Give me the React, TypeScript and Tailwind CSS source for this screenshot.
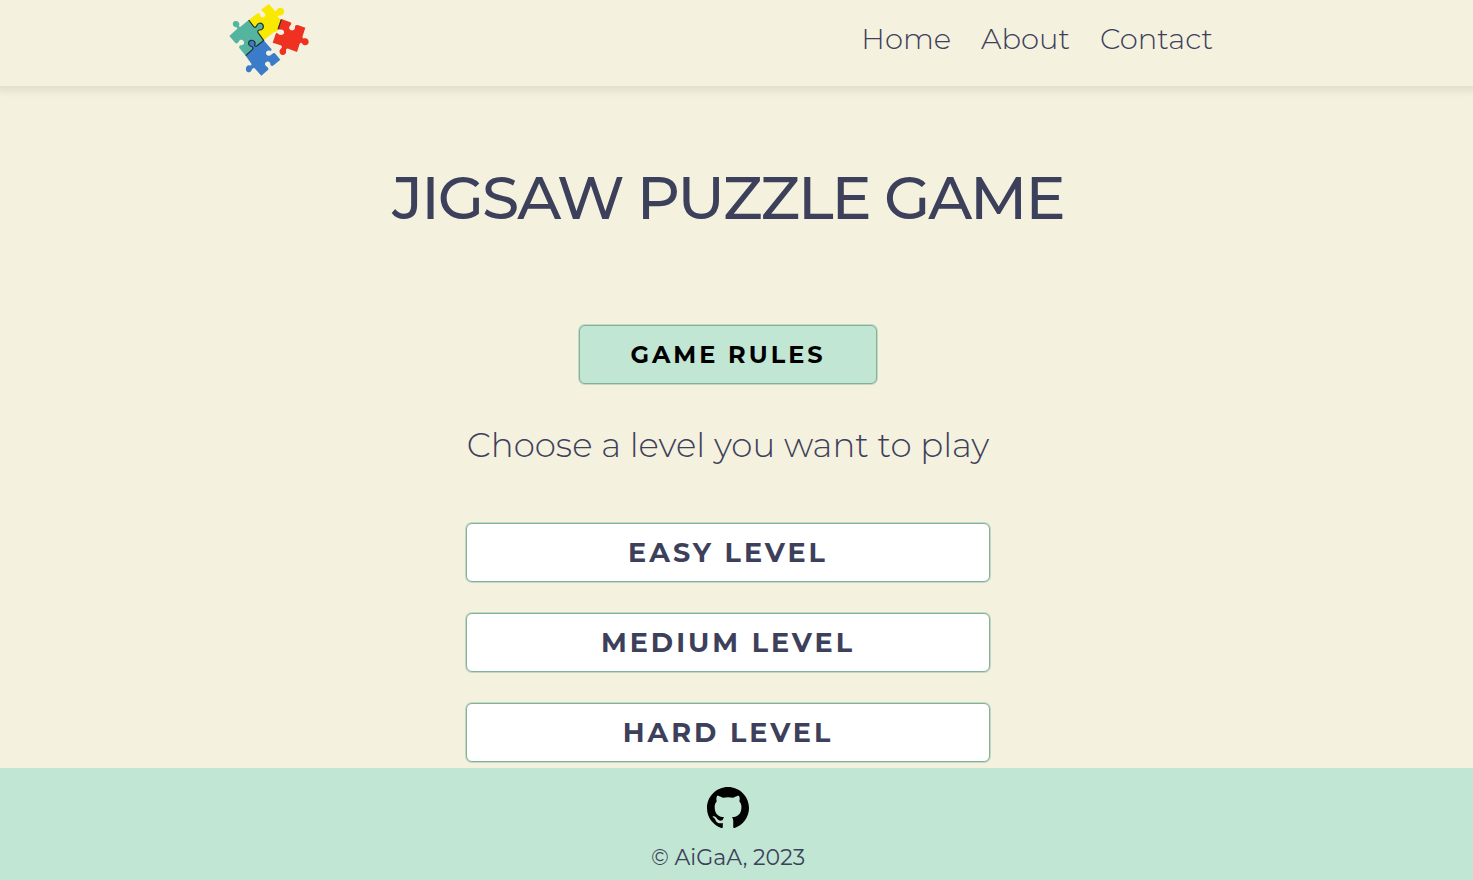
import React from "react";

const navLinks = ["Home", "About", "Contact"];
const levels = ["Easy level", "Medium level", "Hard level"];

function PuzzleLogo() {
  return (
    <svg viewBox="24 0 246 240" className="h-20 w-[82px]" aria-hidden="true">
      <path
        fill="#f9e900"
        d="M86 60 L111 41 C116 38 120 40 120 44 C121 50 125 53 130 52 C137 50 138 42 133 38 C129 35 122 33 125 28 L147 12 L163 31 C166 35 169 34 170 31 C172 23 183 20 190 27 C196 36 190 47 180 47 C174 46 171 49 174 52 L183 59 L173 92 L160 98 L131 121 Z"
      />
      <path
        fill="#ef3122"
        d="M184 57 L211 67 C216 70 214 74 210 77 C205 82 208 90 215 91 C222 92 225 88 225 82 C224 77 227 74 233 75 L256 83 L248 108 C246 113 249 116 253 115 C261 113 267 120 266 128 C263 137 252 138 247 131 C245 127 241 127 239 131 L231 156 L205 146 C200 145 197 148 198 153 C200 161 192 166 186 165 C178 162 176 152 182 147 C187 144 187 139 182 136 L158 128 L167 102 C168 98 172 99 175 102 C180 107 190 105 192 100 C194 93 188 88 181 89 C176 89 173 88 174 84 Z"
      />
      <path
        fill="#3a7bca"
        d="M131 121 L154 147 C156 151 153 153 149 152 C142 150 137 156 138 161 C140 167 148 169 153 165 C157 161 162 156 166 161 L181 179 L161 196 C156 200 151 197 151 192 C151 186 146 183 140 185 C134 188 133 194 138 198 C144 202 148 206 143 211 L124 227 L106 207 C102 202 98 204 95 210 C92 218 83 219 79 213 C75 204 80 196 88 196 C94 197 96 194 93 190 L77 167 L97 149 C101 144 98 140 91 138 C83 134 84 123 93 121 C102 119 108 128 104 135 C103 139 107 140 111 137 Z"
      />
      <path
        fill="#53b59f"
        d="M28 108 L51 87 C53 83 51 82 47 82 C37 80 36 68 43 64 C53 60 61 69 57 77 C56 81 60 82 64 78 L86 60 L101 80 C105 84 109 81 111 76 C114 69 122 67 128 73 C133 81 128 90 120 90 C113 90 112 94 115 99 L131 121 L111 137 C107 140 103 139 104 135 C108 128 102 119 93 121 C84 123 83 134 91 138 C98 140 101 144 97 149 L77 167 L58 144 C56 139 59 136 64 136 C71 136 74 130 71 124 C68 118 60 118 57 124 C55 129 50 132 46 129 Z"
      />
      <path
        fill="none"
        stroke="#222b2b"
        strokeWidth="3.5"
        d="M86 60 L101 80 C105 84 109 81 111 76 C114 69 122 67 128 73 C133 81 128 90 120 90 C113 90 112 94 115 99 L131 121 L111 137 C107 140 103 139 104 135 C108 128 102 119 93 121 C84 123 83 134 91 138 C98 140 101 144 97 149 L77 167 M184 58 L174 88"
      />
    </svg>
  );
}

function GithubMark() {
  return (
    <svg viewBox="0 0 16 16" className="size-[42px]" fill="#000" aria-hidden="true">
      <path d="M8 0C3.58 0 0 3.58 0 8c0 3.54 2.29 6.53 5.47 7.59.4.07.55-.17.55-.38 0-.19-.01-.82-.01-1.49-2.01.37-2.53-.49-2.69-.94-.09-.23-.48-.94-.82-1.13-.28-.15-.68-.52-.01-.53.63-.01 1.08.58 1.23.82.72 1.21 1.87.87 2.33.66.07-.52.28-.87.51-1.07-1.78-.2-3.64-.89-3.64-3.95 0-.87.31-1.59.82-2.15-.08-.2-.36-1.02.08-2.12 0 0 .67-.21 2.2.82.64-.18 1.32-.27 2-.27s1.36.09 2 .27c1.53-1.04 2.2-.82 2.2-.82.44 1.1.16 1.92.08 2.12.51.56.82 1.27.82 2.15 0 3.07-1.87 3.75-3.65 3.95.29.25.54.73.54 1.48 0 1.07-.01 1.93-.01 2.2 0 .21.15.46.55.38A8.01 8.01 0 0 0 16 8c0-4.42-3.58-8-8-8z" />
    </svg>
  );
}

export default function App() {
  return (
    <div className="flex min-h-screen flex-col bg-[#f4f1de] font-[Montserrat,Inter,sans-serif] text-[#3d405b]">
      <header className="pr-[17px] shadow-[0_0_8px_4px_rgba(61,80,60,0.12)]">
        <div className="mx-auto flex h-[86px] max-w-[1000px] items-start justify-between">
          <a href="#home" aria-label="Jigsaw puzzle home">
            <PuzzleLogo />
          </a>
          <nav className="flex gap-[30px] px-[15px] pt-[18px] text-[29px] leading-[42px] font-light">
            {navLinks.map((label) => (
              <a key={label} href={`#${label.toLowerCase()}`}>
                {label}
              </a>
            ))}
          </nav>
        </div>
      </header>

      <main className="flex grow flex-col items-center pr-[17px] pb-[5px]">
        <h1 className="mt-[76px] text-[60px] leading-[72px] font-medium tracking-[-2px] uppercase">
          Jigsaw puzzle game
        </h1>
        <button
          type="button"
          className="mt-[91px] h-[59px] w-[298px] rounded-md border border-[#81b29a] bg-[#c1e6d3] pt-px text-2xl font-bold tracking-[3px] text-black uppercase ring-1 ring-[#81b29a]/40"
        >
          Game rules
        </button>
        <p className="mt-[37px] text-[34px] leading-[48px] font-light">
          Choose a level you want to play
        </p>
        <div className="mt-[54px] flex w-[524px] max-w-full flex-col gap-[31px]">
          {levels.map((level) => (
            <button
              key={level}
              type="button"
              className="h-[59px] rounded-md border border-[#81b29a] bg-white pt-px text-[27px] font-bold tracking-[3px] uppercase ring-1 ring-[#81b29a]/40"
            >
              {level}
            </button>
          ))}
        </div>
      </main>

      <footer className="flex flex-col items-center bg-[#c1e6d3] pt-[19px] pr-[17px] pb-[7px]">
        <a href="#github" aria-label="GitHub">
          <GithubMark />
        </a>
        <p className="mt-[14px] text-[22px] leading-[30px]">© AiGaA, 2023</p>
      </footer>
    </div>
  );
}
